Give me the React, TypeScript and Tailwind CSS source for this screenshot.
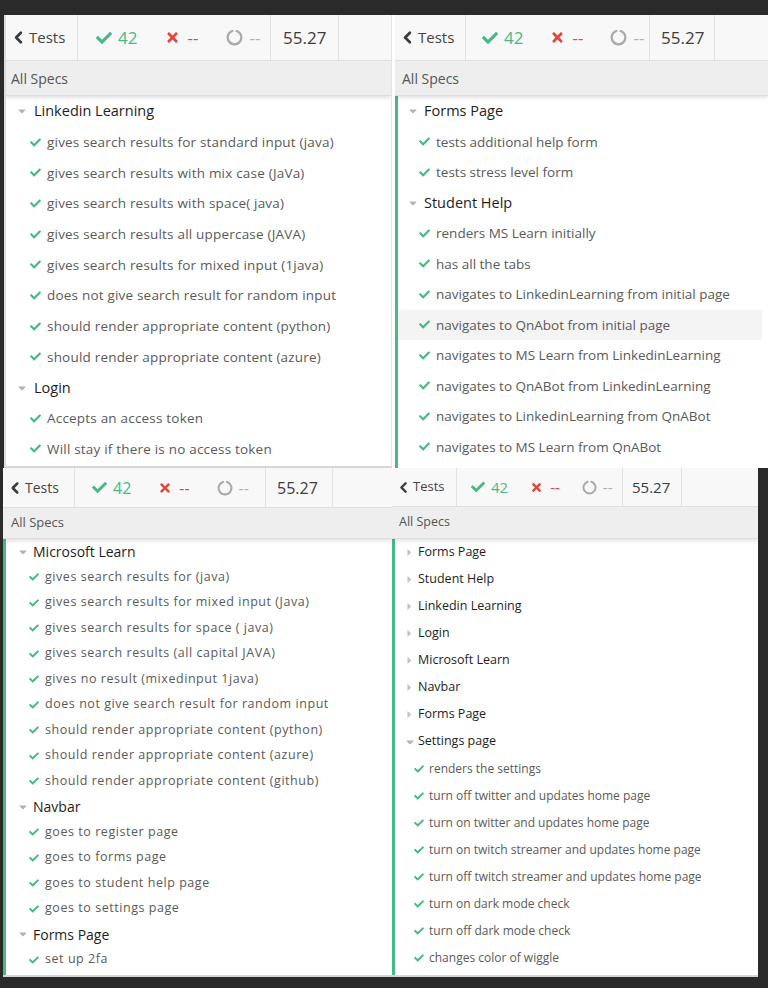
import { ChevronLeft } from "lucide-react";
import { FaCheck, FaTimes, FaCaretDown, FaCaretRight } from "react-icons/fa";

type Row =
  | { kind: "spec"; title: string; open: boolean }
  | { kind: "test"; title: string; hover?: boolean };

interface PanelStyle {
  panel: string;
  header: string;
  backCell: string;
  statsCell: string;
  timeCell: string;
  backText: string;
  statText: string;
  timeText: string;
  iconSize: number;
  chevronSize: number;
  ringSize: number;
  allSpecs: string;
  body: string;
  row: string;
  specText: string;
  testText: string;
  caretCell: string;
  checkCell: string;
  checkSize: number;
}

const FONT = "font-['Open_Sans',sans-serif]";

const spec = (title: string, open = true): Row => ({ kind: "spec", title, open });
const test = (title: string, hover = false): Row => ({ kind: "test", title, hover });

const TOP_LEFT: Row[] = [
  spec("Linkedin Learning"),
  test("gives search results for standard input (java)"),
  test("gives search results with mix case (JaVa)"),
  test("gives search results with space( java)"),
  test("gives search results all uppercase (JAVA)"),
  test("gives search results for mixed input (1java)"),
  test("does not give search result for random input"),
  test("should render appropriate content (python)"),
  test("should render appropriate content (azure)"),
  spec("Login"),
  test("Accepts an access token"),
  test("Will stay if there is no access token"),
];

const TOP_RIGHT: Row[] = [
  spec("Forms Page"),
  test("tests additional help form"),
  test("tests stress level form"),
  spec("Student Help"),
  test("renders MS Learn initially"),
  test("has all the tabs"),
  test("navigates to LinkedinLearning from initial page"),
  test("navigates to QnAbot from initial page", true),
  test("navigates to MS Learn from LinkedinLearning"),
  test("navigates to QnABot from LinkedinLearning"),
  test("navigates to LinkedinLearning from QnABot"),
  test("navigates to MS Learn from QnABot"),
];

const BOTTOM_LEFT: Row[] = [
  spec("Microsoft Learn"),
  test("gives search results for (java)"),
  test("gives search results for mixed input (Java)"),
  test("gives search results for space ( java)"),
  test("gives search results (all capital JAVA)"),
  test("gives no result (mixedinput 1java)"),
  test("does not give search result for random input"),
  test("should render appropriate content (python)"),
  test("should render appropriate content (azure)"),
  test("should render appropriate content (github)"),
  spec("Navbar"),
  test("goes to register page"),
  test("goes to forms page"),
  test("goes to student help page"),
  test("goes to settings page"),
  spec("Forms Page"),
  test("set up 2fa"),
];

const BOTTOM_RIGHT: Row[] = [
  spec("Forms Page", false),
  spec("Student Help", false),
  spec("Linkedin Learning", false),
  spec("Login", false),
  spec("Microsoft Learn", false),
  spec("Navbar", false),
  spec("Forms Page", false),
  spec("Settings page"),
  test("renders the settings"),
  test("turn off twitter and updates home page"),
  test("turn on twitter and updates home page"),
  test("turn on twitch streamer and updates home page"),
  test("turn off twitch streamer and updates home page"),
  test("turn on dark mode check"),
  test("turn off dark mode check"),
  test("changes color of wiggle"),
];

const S_TOP_LEFT: PanelStyle = {
  panel: "w-[388px] border-l-2 border-[#dcdcdc] border-b-2 border-b-[#d6d6d6] border-r border-r-[#e4e4e4]",
  header: "h-[46px]",
  backCell: "w-[72px] pl-[3px] gap-[1px]",
  statsCell: "w-[193px] pl-[18px] gap-[28px]",
  timeCell: "w-[68px] pl-[12px]",
  backText: "text-[15px]",
  statText: "text-[17px]",
  timeText: "text-[17px]",
  iconSize: 16,
  chevronSize: 19,
  ringSize: 17,
  allSpecs: "h-[35px] pl-[5px] text-[14px]",
  body: "",
  row: "h-[30.7px]",
  specText: "text-[14.5px]",
  testText: "text-[13.5px] tracking-[0.2px]",
  caretCell: "w-[28px] pl-[10px]",
  checkCell: "w-[41px] pl-[24px]",
  checkSize: 11,
};

const S_TOP_RIGHT: PanelStyle = {
  panel: "flex-1 ml-[3px]",
  header: "h-[46px]",
  backCell: "w-[71px] pl-[3px] gap-[1px]",
  statsCell: "w-[184px] pl-[16px] gap-[27px]",
  timeCell: "w-[65px] pl-[11px]",
  backText: "text-[15px]",
  statText: "text-[17px]",
  timeText: "text-[17px]",
  iconSize: 16,
  chevronSize: 19,
  ringSize: 17,
  allSpecs: "h-[35px] pl-[7px] text-[14px]",
  body: "border-l-[3px] border-[#48b886] mr-[6px]",
  row: "h-[30.5px]",
  specText: "text-[14.5px]",
  testText: "text-[13.5px]",
  caretCell: "w-[26px] pl-[9px]",
  checkCell: "w-[38px] pl-[21px]",
  checkSize: 11,
};

const S_BOTTOM_LEFT: PanelStyle = {
  panel: "w-[389px] ml-[3px] border-b-2 border-b-[#d6d6d6]",
  header: "h-[40px]",
  backCell: "w-[72px] pl-[3px] gap-[1px]",
  statsCell: "w-[191px] pl-[17px] gap-[27px]",
  timeCell: "w-[67px] pl-[11px]",
  backText: "text-[14px]",
  statText: "text-[16px]",
  timeText: "text-[16px]",
  iconSize: 15,
  chevronSize: 18,
  ringSize: 16,
  allSpecs: "h-[31px] pl-[8px] text-[13px]",
  body: "border-l-[3px] border-[#48b886]",
  row: "h-[25.5px]",
  specText: "text-[14px]",
  testText: "text-[12.5px] tracking-[0.55px]",
  caretCell: "w-[27px] pl-[11px]",
  checkCell: "w-[39px] pl-[23px]",
  checkSize: 10,
};

const S_BOTTOM_RIGHT: PanelStyle = {
  panel: "w-[366px] border-b-2 border-b-[#d6d6d6]",
  header: "h-[39px]",
  backCell: "w-[65px] pl-[3px] gap-[1px]",
  statsCell: "w-[166px] pl-[14px] gap-[22px]",
  timeCell: "w-[59px] pl-[9px]",
  backText: "text-[13px]",
  statText: "text-[15px]",
  timeText: "text-[15px]",
  iconSize: 14,
  chevronSize: 17,
  ringSize: 15,
  allSpecs: "h-[32px] pl-[7px] text-[12.5px]",
  body: "border-l-[3px] border-[#48b886]",
  row: "h-[27px]",
  specText: "text-[12.5px]",
  testText: "text-[12px]",
  caretCell: "w-[23px] pl-[9px]",
  checkCell: "w-[34px] pl-[19px]",
  checkSize: 10,
};

// pending spinner: open ring, gap at the top
function Ring({ size }: { size: number }) {
  return (
    <svg width={size} height={size} viewBox="0 0 20 20" fill="none">
      <path
        d="M12.5 2.4 A8 8 0 1 1 7.5 2.4"
        stroke="#a9a9a9"
        strokeWidth="2.6"
        strokeLinecap="round"
      />
    </svg>
  );
}

function Panel({ s, rows }: { s: PanelStyle; rows: Row[] }) {
  return (
    <div className={`flex flex-col bg-white overflow-hidden ${s.panel}`}>
      <div className={`flex shrink-0 bg-[#f8f8f8] border-b border-[#e2e2e2] ${s.header}`}>
        <div className={`flex items-center border-r border-[#e2e2e2] text-[#444] ${s.backCell}`}>
          <ChevronLeft size={s.chevronSize} strokeWidth={3.4} className="text-[#3a3a3a]" />
          <span className={s.backText}>Tests</span>
        </div>
        <div className={`flex items-center border-r border-[#e2e2e2] ${s.statsCell}`}>
          <span className="flex items-center gap-[6px] text-[#48b886]">
            <FaCheck size={s.iconSize} />
            <span className={s.statText}>42</span>
          </span>
          <span className="flex items-center gap-[7px] text-[#e0483e]">
            <FaTimes size={s.iconSize - 1} />
            <span className={s.statText}>--</span>
          </span>
          <span className="flex items-center gap-[6px] text-[#b0b0b0]">
            <Ring size={s.ringSize} />
            <span className={s.statText}>--</span>
          </span>
        </div>
        <div className={`flex items-center border-r border-[#e2e2e2] text-[#3c3c3c] ${s.timeCell}`}>
          <span className={s.timeText}>55.27</span>
        </div>
      </div>
      <div
        className={`flex shrink-0 items-center bg-[#eeeeee] text-[#555] border-b border-[#dedede] shadow-[0_2px_4px_rgba(0,0,0,0.12)] relative z-10 ${s.allSpecs}`}
      >
        All Specs
      </div>
      <div className={`flex-1 ${s.body}`}>
        {rows.map((r, i) =>
          r.kind === "spec" ? (
            <div key={i} className={`flex items-center ${s.row}`}>
              <span className={`flex items-center ${s.caretCell}`}>
                {r.open ? (
                  <FaCaretDown size={12} className="text-[#b3b3b3]" />
                ) : (
                  <FaCaretRight size={11} className="text-[#c2c2c2]" />
                )}
              </span>
              <span className={`text-[#1e1e1e] ${s.specText}`}>{r.title}</span>
            </div>
          ) : (
            <div
              key={i}
              className={`flex items-center ${s.row} ${r.hover ? "bg-[#f4f4f4]" : ""}`}
            >
              <span className={`flex items-center ${s.checkCell}`}>
                <FaCheck size={s.checkSize} className="text-[#48b886]" />
              </span>
              <span className={`text-[#5a5a5a] ${s.testText}`}>{r.title}</span>
            </div>
          ),
        )}
      </div>
    </div>
  );
}

export default function App() {
  return (
    <div className={`w-[768px] h-[988px] bg-[#2a2a2a] flex flex-col ${FONT}`}>
      <div className="pt-[15px] pl-[4px] shrink-0">
        <div className="flex h-[453px] bg-white">
          <Panel s={S_TOP_LEFT} rows={TOP_LEFT} />
          <Panel s={S_TOP_RIGHT} rows={TOP_RIGHT} />
        </div>
      </div>
      <div className="flex h-[509px] shrink-0">
        <Panel s={S_BOTTOM_LEFT} rows={BOTTOM_LEFT} />
        <Panel s={S_BOTTOM_RIGHT} rows={BOTTOM_RIGHT} />
      </div>
    </div>
  );
}
